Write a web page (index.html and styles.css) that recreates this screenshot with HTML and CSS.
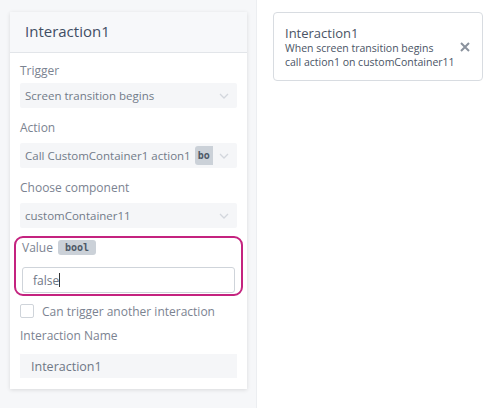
FILE: index.html
```html
<!DOCTYPE html>
<html>
<head>
<meta charset="utf-8">
<link rel="stylesheet" href="styles.css">
</head>
<body>
<div class="layout">
  <aside class="sidebar">
    <div class="panel">
      <div class="panel-head">Interaction1</div>
      <div class="panel-body">
        <div class="field">
          <div class="label first">Trigger</div>
          <div class="select"><span class="select-text">Screen transition begins</span><svg class="chev" width="10" height="6" viewBox="0 0 10 6"><path d="M1 1l4 4 4-4" fill="none" stroke="#d3d7dd" stroke-width="1.3"/></svg></div>
        </div>
        <div class="field">
          <div class="label">Action</div>
          <div class="select"><span class="select-text">Call CustomContainer1 action1 <span class="badge clip">bo</span></span><svg class="chev" width="10" height="6" viewBox="0 0 10 6"><path d="M1 1l4 4 4-4" fill="none" stroke="#d3d7dd" stroke-width="1.3"/></svg></div>
        </div>
        <div class="field last">
          <div class="label">Choose component</div>
          <div class="select"><span class="select-text">customContainer11</span><svg class="chev" width="10" height="6" viewBox="0 0 10 6"><path d="M1 1l4 4 4-4" fill="none" stroke="#d3d7dd" stroke-width="1.3"/></svg></div>
        </div>
        <div class="value-box">
          <div class="value-label">Value <span class="badge">bool</span></div>
          <div class="input"><span>false</span><span class="caret"></span></div>
        </div>
        <label class="check"><span class="box"></span>Can trigger another interaction</label>
        <div class="label name-label">Interaction Name</div>
        <div class="name-input">Interaction1</div>
      </div>
    </div>
  </aside>
  <main class="main">
    <div class="card">
      <div class="card-text">
        <div class="card-title">Interaction1</div>
        <div class="card-line">When screen transition begins</div>
        <div class="card-line">call action1 on customContainer11</div>
      </div>
      <svg class="close" width="10" height="10" viewBox="0 0 10 10"><path d="M1 1l8 8M9 1l-8 8" stroke="#8a929d" stroke-width="2"/></svg>
    </div>
  </main>
</div>
</body>
</html>
```
FILE: styles.css
```css
* { box-sizing: border-box; }
html, body { margin: 0; padding: 0; }
body {
  font-family: "Open Sans", "Liberation Sans", sans-serif;
  background: #ffffff;
  width: 492px;
  height: 408px;
  overflow: hidden;
}
.layout { display: flex; height: 408px; }
.sidebar {
  width: 258px;
  background: #f6f7f9;
  border-right: 1px solid #eceef1;
  padding: 12px 9px 0 10px;
}
.panel {
  background: #fff;
  box-shadow: 0 1px 4px rgba(0,0,0,0.12);
  height: 377px;
}
.panel-head {
  height: 41px;
  background: #f7f8fa;
  border-bottom: 1px solid #e2e5e9;
  padding: 9px 15px 0;
  font-size: 15px;
  color: #414e64;
}
.panel-body { padding: 9px 10px 0 10px; }
.field { margin-bottom: 11px; }
.field.last { margin-bottom: 8px; }
.label {
  font-size: 12px;
  color: #7b8391;
  line-height: 17px;
  margin-bottom: 7px;
}
.label.first { margin-bottom: 4px; }
.select {
  height: 25px;
  background: #f5f6f8;
  display: flex;
  align-items: center;
  justify-content: space-between;
  padding: 0 8px 0 5px;
  border-radius: 2px;
}
.select-text { font-size: 11.5px; color: #727b88; white-space: nowrap; display: flex; align-items: center; gap: 4px; }
.chev { flex: none; }
.badge {
  display: inline-block;
  background: #cbd1d8;
  border-radius: 3px;
  font-family: "DejaVu Sans Mono", "Liberation Mono", monospace;
  font-weight: bold;
  font-size: 10px;
  color: #4d5866;
  padding: 1px 7px;
  line-height: 13px;
}
.badge.clip { padding: 3px 3px; border-radius: 3px 0 0 3px; }
.value-box {
  margin: 0 -6px;
  border: 2px solid #c4237f;
  border-radius: 9px;
  padding: 1px 6px 1px 6px;
  height: 60px;
}
.value-label { font-size: 12px; color: #7b8391; display: flex; align-items: center; gap: 5px; height: 17px; margin-bottom: 11px; }
.input {
  height: 26px;
  border: 1px solid #cfd4da;
  border-radius: 3px;
  background: #fff;
  padding: 0 10px;
  display: flex;
  align-items: center;
  font-size: 12px;
  color: #6f7886;
}
.caret { width: 1px; height: 14px; background: #333; }
.check {
  display: flex;
  align-items: center;
  gap: 8px;
  font-size: 12px;
  color: #7b8391;
  margin: 8px 0 9px;
  height: 14px;
}
.box { width: 14px; height: 14px; border: 1px solid #cfd4da; border-radius: 2px; background: #fff; }
.name-label { margin-bottom: 10px; }
.name-input {
  height: 24px;
  background: #f5f6f8;
  padding: 0 11px;
  display: flex;
  align-items: center;
  font-size: 12.5px;
  color: #6f7886;
}
.main { flex: 1; padding: 12px 9px 0 16px; }
.card {
  width: 210px;
  height: 69px;
  border: 1px solid #d8dce1;
  border-radius: 4px;
  display: flex;
  align-items: center;
  justify-content: space-between;
  padding: 0 12px 0 11px;
}
.card-title { font-size: 13px; color: #4a5465; line-height: 16px; }
.card-line { font-size: 10.5px; color: #4a5465; line-height: 14px; }
.close { flex: none; }
```
